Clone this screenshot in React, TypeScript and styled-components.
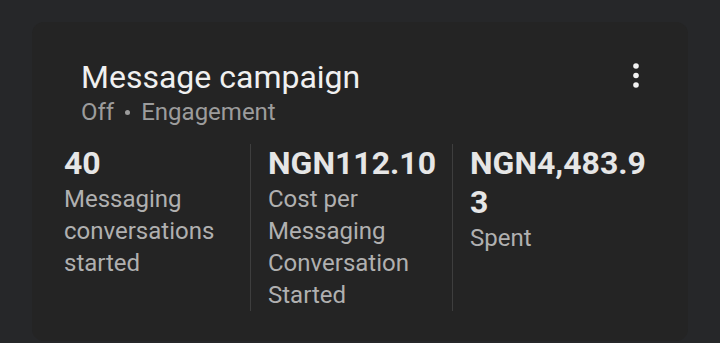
import React from 'react';
import styled, { createGlobalStyle } from 'styled-components';

const GlobalStyle = createGlobalStyle`
  html, body {
    margin: 0;
    padding: 0;
    background: #262729;
    font-family: Roboto, "Noto Sans", Arial, sans-serif;
    -webkit-font-smoothing: antialiased;
  }
`;

// Outer page
const Page = styled.div`
  width: 720px;
  height: 343px;
  overflow: hidden;
  padding: 22px 32px 0;
  box-sizing: border-box;
`;

// Campaign card
const Card = styled.div`
  background: #242424;
  border-radius: 12px;
  height: 319px;
  box-sizing: border-box;
  padding: 36px 32px 0 32px;
`;

const Header = styled.div`
  display: flex;
  align-items: flex-start;
  justify-content: space-between;
  padding-left: 17px;
`;

const TitleBlock = styled.div`
  display: flex;
  flex-direction: column;
`;

const Title = styled.div`
  color: #f0f0f0;
  font-size: 32px;
  line-height: 38px;
`;

const Subtitle = styled.div`
  color: #9c9c9c;
  font-size: 24px;
  line-height: 32px;
  display: flex;
  align-items: center;
  gap: 11px;
`;

const Dot = styled.span`
  width: 5px;
  height: 5px;
  margin-top: 1px;
  border-radius: 50%;
  background: #9c9c9c;
`;

const MenuButton = styled.button`
  background: none;
  border: none;
  padding: 0;
  margin: 4px 16px 0 0;
  color: #f2f2f2;
  display: flex;
  cursor: pointer;
`;

// Metrics row
const Stats = styled.div`
  display: flex;
  margin-top: 16px;
`;

const Stat = styled.div<{ $first?: boolean }>`
  width: ${p => (p.$first ? '186px' : '184px')};
  padding-left: ${p => (p.$first ? '0' : '17px')};
  border-left: ${p => (p.$first ? 'none' : '1px solid #3e3e3e')};
`;

const Value = styled.div`
  color: #e6e6e6;
  font-size: 32px;
  font-weight: 700;
  line-height: 39px;
  overflow-wrap: anywhere;
`;

const Label = styled.div`
  color: #b0b0b0;
  font-size: 24px;
  line-height: 32px;
`;

const stats = [
  { value: '40', label: 'Messaging conversations started' },
  { value: 'NGN112.10', label: 'Cost per Messaging Conversation Started' },
  { value: 'NGN4,483.93', label: 'Spent' },
];

const App: React.FC = () => {
  return (
    <Page>
      <GlobalStyle />
      <Card>
        <Header>
          <TitleBlock>
            <Title>Message campaign</Title>
            <Subtitle>
              Off
              <Dot />
              Engagement
            </Subtitle>
          </TitleBlock>
          <MenuButton aria-label="More">
            <svg width="8" height="27" viewBox="0 0 8 27">
              <circle cx="4" cy="4" r="2.8" fill="currentColor" />
              <circle cx="4" cy="13.5" r="2.8" fill="currentColor" />
              <circle cx="4" cy="23" r="2.8" fill="currentColor" />
            </svg>
          </MenuButton>
        </Header>
        <Stats>
          {stats.map((s, i) => (
            <Stat key={s.value} $first={i === 0}>
              <Value>{s.value}</Value>
              <Label>{s.label}</Label>
            </Stat>
          ))}
        </Stats>
      </Card>
    </Page>
  );
};

export default App;
